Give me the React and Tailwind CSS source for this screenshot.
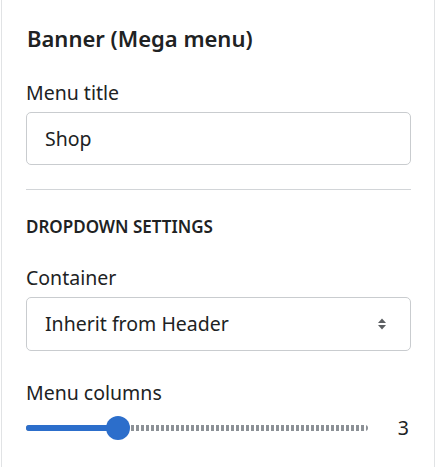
import { useState } from "react";

const FONT = { fontFamily: '"Noto Sans", "Open Sans", Arial, sans-serif' };

function Field({ label, children }) {
  return (
    <div>
      <p className="text-[19.5px] leading-[26px] text-[#202223]">{label}</p>
      <div className="mt-[6px]">{children}</div>
    </div>
  );
}

export default function App() {
  const [columns] = useState(3);
  const min = 1;
  const max = 9;
  const trackWidth = 342;
  const thumb = 24;
  const left = thumb / 2 + ((columns - min) / (max - min)) * (trackWidth - thumb);

  return (
    <div className="h-[467px] w-[436px] bg-white" style={FONT}>
      <div className="ml-px h-full w-[434px] border-x border-[#e1e3e5] pl-[24px] pr-[23px] pt-[24px]">
        {/* Header */}
        <h2 className="pl-px text-[22px] font-semibold leading-[28px] text-[#202223]">Banner (Mega menu)</h2>

        <div className="mt-[28px]">
          <Field label="Menu title">
            <div className="flex h-[53px] items-center rounded-[5px] border border-[#c9cccf] px-[18px] text-[19.5px] text-[#202223]">
              Shop
            </div>
          </Field>
        </div>

        <div className="mt-[24px] border-t border-[#d2d5d8]" />

        <p className="mt-[26px] text-[17px] font-semibold uppercase leading-[22px] text-[#202223]">
          Dropdown settings
        </p>

        <div className="mt-[27px]">
          <Field label="Container">
            <div className="flex h-[54px] items-center justify-between rounded-[5px] border border-[#c9cccf] pl-[18px] pr-[23px] text-[19.5px] text-[#202223]">
              <span>Inherit from Header</span>
              <svg width="10" height="14" viewBox="0 0 10 14" fill="#5c5f62">
                <path d="M5 1.5 9 6H1z" />
                <path d="M5 12.5 1 8h8z" />
              </svg>
            </div>
          </Field>
        </div>

        {/* Slider */}
        <div className="mt-[29px]">
          <p className="text-[19.5px] leading-[26px] text-[#202223]">Menu columns</p>
          <div className="mt-[9px] flex items-center">
            <div className="relative h-[24px] w-[342px]">
              <div className="absolute left-0 right-0 top-[9px] h-[6px] rounded-full bg-[repeating-linear-gradient(90deg,#8c9196_0_3px,transparent_3px_5px)]" />
              <div
                className="absolute left-0 top-[9px] h-[6px] rounded-full bg-[#2c6ecb]"
                style={{ width: `${left}px` }}
              />
              <div
                className="absolute top-0 h-[24px] w-[24px] -translate-x-1/2 rounded-full bg-[#2c6ecb]"
                style={{ left: `${left}px` }}
              />
            </div>
            <span className="ml-auto pr-[2px] text-[19.5px] leading-[26px] text-[#202223]">{columns}</span>
          </div>
        </div>
      </div>
    </div>
  );
}
